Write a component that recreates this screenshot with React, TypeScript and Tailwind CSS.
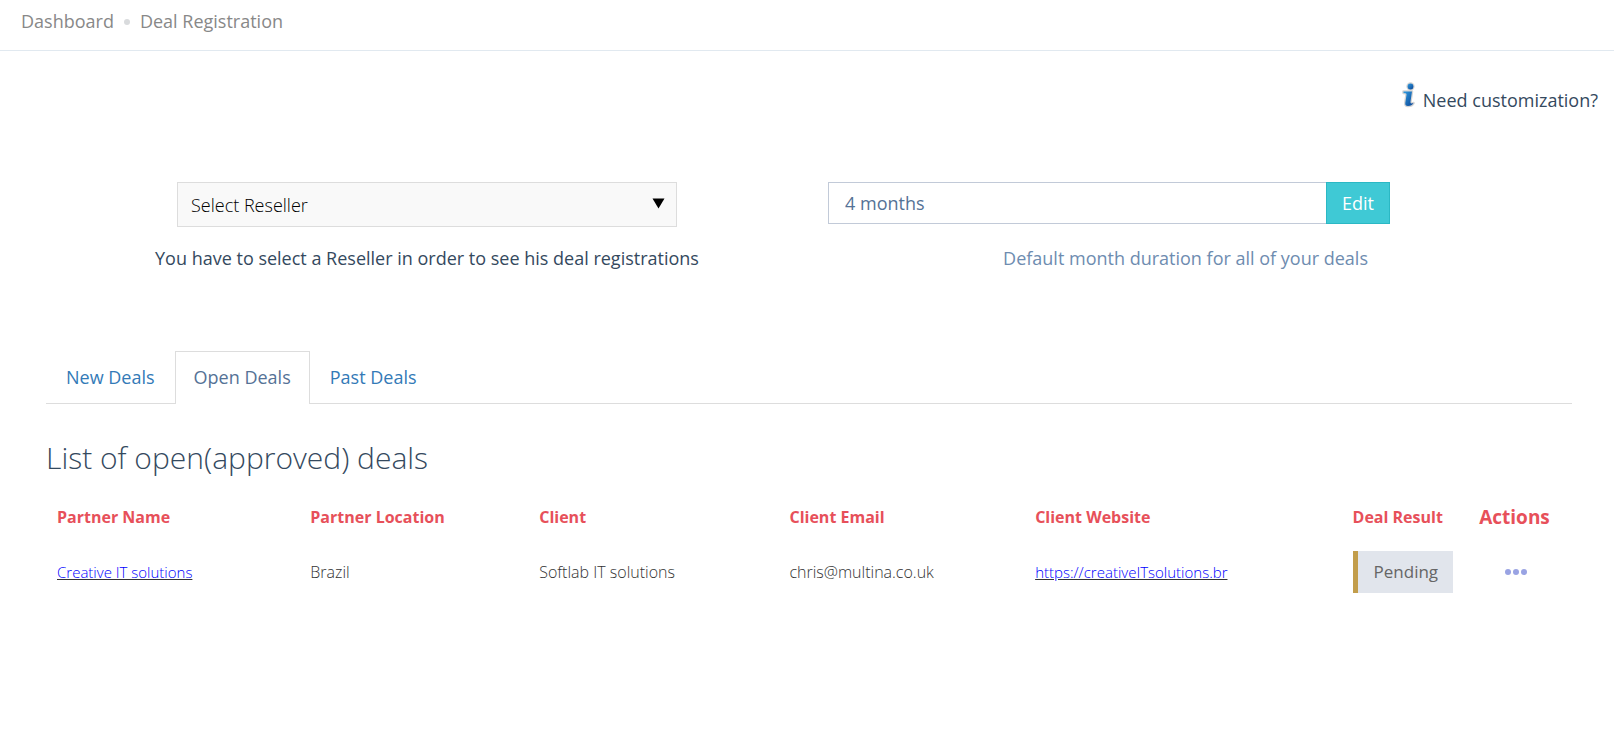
import { useState } from 'react';

const tabs = ['New Deals', 'Open Deals', 'Past Deals'];

const deals = [
  {
    partner: 'Creative IT solutions',
    location: 'Brazil',
    client: 'Softlab IT solutions',
    email: 'chris@multina.co.uk',
    website: 'https://creativeITsolutions.br',
    result: 'Pending',
  },
];

function InfoIcon() {
  return (
    <svg width="14" height="26" viewBox="0 0 14 26" aria-hidden="true">
      <defs>
        <linearGradient id="info" x1="0" y1="0" x2="1" y2="1">
          <stop offset="0" stopColor="#2f9be0" />
          <stop offset="1" stopColor="#0b4596" />
        </linearGradient>
      </defs>
      <g stroke="#d4d4d4" strokeWidth="2.5" strokeLinejoin="round" fill="#d4d4d4">
        <circle cx="8.500" cy="4.500" r="2.900" />
        <path d="M1.500 9.500h8.500L8.500 19.500q-.3 2 1 2l2-.4q-1.500 2.900-5.500 2.900-3.200 0-2.700-3.200l1.200-8q.2-1.400-1-1.500l-2-.3z" />
      </g>
      <g fill="url(#info)">
        <circle cx="8.500" cy="4.500" r="2.900" />
        <path d="M1.500 9.500h8.500L8.500 19.500q-.3 2 1 2l2-.4q-1.500 2.900-5.500 2.900-3.200 0-2.700-3.200l1.200-8q.2-1.400-1-1.500l-2-.3z" />
      </g>
    </svg>
  );
}

export default function App() {
  const [active, setActive] = useState('Open Deals');

  return (
    <div className="bg-white font-['Open_Sans',sans-serif] text-[18px] leading-6 text-[#34495e]">
      <nav aria-label="Breadcrumb" className="flex h-[51px] items-start border-b border-[#e1e9f0] px-[21px] pt-[9px] text-[#888888]">
        <a href="#dashboard">Dashboard</a>
        <span className="mx-[10px] mt-[10px] size-[6px] rounded-full bg-[#d9dbdd]" />
        <a href="#deals">Deal Registration</a>
      </nav>

      <div className="flex justify-end gap-[7px] pt-[31px] pr-4">
        <InfoIcon />
        <a href="#customize" className="mt-[6px]">Need customization?</a>
      </div>

      <div className="mt-[70px] grid grid-cols-[minmax(0,500fr)_minmax(0,562fr)] gap-[151px] pr-[224px] pl-[177px]">
        <div>
          <div className="relative">
            <select
              aria-label="Reseller"
              aria-describedby="reseller-help"
              className="block h-[45px] w-full appearance-none border border-[#dddddd] bg-[#f9f9f9] pr-10 pl-[13px] font-light text-black"
            >
              <option>Select Reseller</option>
            </select>
            <svg className="pointer-events-none absolute top-4 right-3" width="13" height="11" viewBox="0 0 13 11" aria-hidden="true">
              <path d="M.5.5h12l-6 10z" fill="#000" />
            </svg>
          </div>
          <p id="reseller-help" className="-mx-6 mt-[19px] text-center">
            You have to select a Reseller in order to see his deal registrations
          </p>
        </div>
        <div>
          <div className="flex h-[42px]">
            <input
              aria-label="Deal duration"
              aria-describedby="duration-help"
              defaultValue="4 months"
              className="min-w-0 flex-1 border border-r-0 border-[#c2cad8] bg-white px-4 text-[#557296]"
            />
            <button type="button" className="w-[64px] border border-[#2bb8c4] bg-[#3fc9d5] text-white">Edit</button>
          </div>
          <p id="duration-help" className="mt-[22px] pr-[22px] text-right text-[#6e8cb0]">
            Default month duration for all of your deals
          </p>
        </div>
      </div>

      <main className="mr-[42px] ml-[46px] mt-[81px]">
        <div role="tablist" className="flex border-b border-[#dddddd]">
          {tabs.map((tab) => (
            <button
              key={tab}
              type="button"
              role="tab"
              aria-selected={tab === active}
              onClick={() => setActive(tab)}
              className={
                tab === active
                  ? '-mb-px h-[53px] border border-b-0 border-[#dddddd] bg-white px-[18px] pb-[2px] text-[#557296]'
                  : 'h-[52px] px-[20px] text-[#337ab7]'
              }
            >
              {tab}
            </button>
          ))}
        </div>

        <h1 className="mt-[34px] text-[30px] leading-[40px] font-light">List of open(approved) deals</h1>

        <table className="mt-[19px] w-full table-fixed text-left">
          <colgroup>
            <col className="w-[16.6%]" />
            <col className="w-[15%]" />
            <col className="w-[16.4%]" />
            <col className="w-[16.1%]" />
            <col className="w-[20.8%]" />
            <col className="w-[8.3%]" />
            <col />
          </colgroup>
          <thead>
            <tr className="h-[40px] text-base text-[#e7505a]">
              <th className="pl-[11px] font-bold">Partner Name</th>
              <th className="pl-[11px] font-bold">Partner Location</th>
              <th className="pl-[11px] font-bold">Client</th>
              <th className="pl-[11px] font-bold">Client Email</th>
              <th className="pl-[11px] font-bold">Client Website</th>
              <th className="pl-[11px] font-bold whitespace-nowrap">Deal Result</th>
              <th className="pl-[11px] text-[19px] font-bold">Actions</th>
            </tr>
          </thead>
          <tbody>
            {deals.map((deal) => (
              <tr key={deal.partner} className="h-[70px] text-base font-light text-[#333333]">
                <td className="pl-[11px]">
                  <a href="#partner" className="text-[15px] text-[#0000ff] underline decoration-[#333333]">{deal.partner}</a>
                </td>
                <td className="pl-[11px]">{deal.location}</td>
                <td className="pl-[11px]">{deal.client}</td>
                <td className="pl-[11px]">{deal.email}</td>
                <td className="pl-[11px]">
                  <a href="#website" className="text-[15px] text-[#0000ff] underline decoration-[#333333]">{deal.website}</a>
                </td>
                <td className="pl-[11px]">
                  <span className="flex h-[42px] w-[100px] items-center border-l-[5px] border-[#c29d4b] bg-[#e1e5ec] pl-4 text-[17px] font-normal text-[#666666]">
                    {deal.result}
                  </span>
                </td>
                <td className="pl-[37px]">
                  <button type="button" aria-label="Deal actions" className="flex gap-[2px]">
                    <span className="size-[6px] rounded-full bg-[#99a3e3]" />
                    <span className="size-[6px] rounded-full bg-[#99a3e3]" />
                    <span className="size-[6px] rounded-full bg-[#99a3e3]" />
                  </button>
                </td>
              </tr>
            ))}
          </tbody>
        </table>
      </main>
    </div>
  );
}
